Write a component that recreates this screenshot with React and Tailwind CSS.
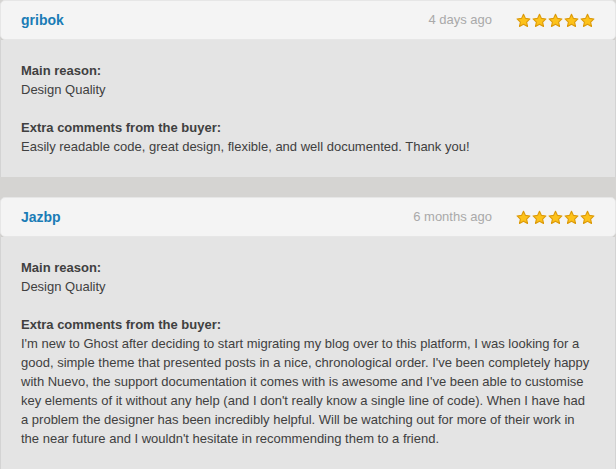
import React from 'react';

const reviews = [
  {
    user: 'gribok',
    when: '4 days ago',
    reason: 'Design Quality',
    comment: 'Easily readable code, great design, flexible, and well documented. Thank you!',
  },
  {
    user: 'Jazbp',
    when: '6 months ago',
    reason: 'Design Quality',
    comment:
      "I'm new to Ghost after deciding to start migrating my blog over to this platform, I was looking for a good, simple theme that presented posts in a nice, chronological order. I've been completely happy with Nuevo, the support documentation it comes with is awesome and I've been able to customise key elements of it without any help (and I don't really know a single line of code). When I have had a problem the designer has been incredibly helpful. Will be watching out for more of their work in the near future and I wouldn't hesitate in recommending them to a friend.",
  },
];

const Star = () => (
  <svg width="15" height="15" viewBox="0 0 24 23" className="block">
    <path
      d="M12 1.5l3.1 6.6 7.2.9-5.3 5 1.4 7.1L12 17.6l-6.4 3.5L7 14l-5.3-5 7.2-.9z"
      fill="#fdc21a"
      stroke="#dc9a0a"
      strokeWidth="1.8"
      strokeLinejoin="round"
    />
  </svg>
);

const ReviewCard = ({ review }) => (
  <div className="flex flex-col">
    <div className="h-10 flex items-center justify-between pl-5 pr-5 bg-[#f4f4f4] rounded-[5px] border border-[#e6e6e6] shadow-[0_1px_1px_rgba(0,0,0,0.04)]">
      <span className="text-[14px] font-bold text-[#1a7cb6]">{review.user}</span>
      <div className="flex items-center">
        <span className="text-[13px] text-[#a9a9a9] mr-6">{review.when}</span>
        <div className="flex gap-[1px]">
          {[0, 1, 2, 3, 4].map((i) => (
            <Star key={i} />
          ))}
        </div>
      </div>
    </div>
    <div className="bg-[#e4e4e4] border-x border-[#d3d3d3] px-5 pt-[21px] pb-[21px] text-[13px] leading-[19px] text-[#404040]">
      <div className="font-bold">Main reason:</div>
      <div>{review.reason}</div>
      <div className="h-[19px]" />
      <div className="font-bold">Extra comments from the buyer:</div>
      <p>{review.comment}</p>
    </div>
  </div>
);

export default function App() {
  return (
    <div
      className="w-[616px] h-[469px] overflow-hidden bg-[#d5d4d2] flex flex-col gap-5"
      style={{ fontFamily: '"Liberation Sans", Arial, sans-serif' }}
    >
      {reviews.map((r) => (
        <ReviewCard key={r.user} review={r} />
      ))}
    </div>
  );
}
